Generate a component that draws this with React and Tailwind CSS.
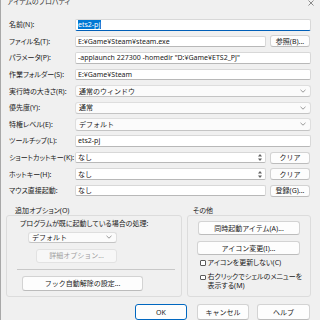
import React from "react";

const FONT = "font-['Noto_Sans','Noto_Sans_CJK_JP',sans-serif]";
const PALT = "[font-feature-settings:'palt']";

function Spinner() {
  return (
    <svg width="6" height="9" viewBox="0 0 6 9" className="shrink-0">
      <path d="M1 3.5 L3 1 L5 3.5 Z" fill="#606060" />
      <path d="M1 5.5 L3 8 L5 5.5 Z" fill="#606060" />
    </svg>
  );
}

function Chevron() {
  return (
    <svg width="6" height="4" viewBox="0 0 6 4" className="shrink-0">
      <path d="M0.5 0.8 L3 3.2 L5.5 0.8" fill="none" stroke="#707070" strokeWidth="0.7" />
    </svg>
  );
}

function Btn({ children, className = "" }) {
  return (
    <div
      className={
        "flex items-center justify-center whitespace-nowrap bg-[#fdfdfd] border border-[#d3d3d3] border-b-[#bcbcbc] rounded-[3px] text-[#1a1a1a] " +
        className
      }
    >
      {children}
    </div>
  );
}

function Row({ label, children }) {
  return (
    <div className="h-[16.7px] flex items-center">
      <div className={"w-[74px] pl-[8px] whitespace-nowrap " + PALT}>{label}</div>
      <div className="flex-1 flex items-center gap-[4px] pr-[9px]">{children}</div>
    </div>
  );
}

function Input({ children, spin = false }) {
  return (
    <div className="flex-1 h-[11.5px] bg-white border border-[#d8d8d8] border-b-[#b8b8b8] rounded-[2px] flex items-center pl-[2px] pr-[2px] overflow-hidden">
      <span className="flex-1 whitespace-nowrap">{children}</span>
      {spin && <Spinner />}
    </div>
  );
}

function Select({ children, className = "flex-1" }) {
  return (
    <div
      className={
        "h-[12.5px] bg-[#fbfbfb] border border-[#dedede] border-b-[#c4c4c4] rounded-[3px] flex items-center pl-[3px] pr-[4px] " +
        className
      }
    >
      <span className="flex-1 whitespace-nowrap">{children}</span>
      <Chevron />
    </div>
  );
}

function Check({ children }) {
  return (
    <div className="flex items-start gap-[2px]">
      <div className="mt-[1.5px] w-[5.5px] h-[5.5px] border border-[#5a5a5a] rounded-[1px] bg-white shrink-0" />
      <div className={"leading-[8.5px] " + PALT}>{children}</div>
    </div>
  );
}

export default function App() {
  return (
    <div
      className={
        "w-[320px] h-[320px] overflow-hidden bg-[#f0f0f0] border-l border-[#a8a8a8] flex flex-col text-[7px] leading-[9px] text-[#1a1a1a] " +
        FONT
      }
    >
      {/* title bar */}
      <div className="h-[16.6px] flex items-start justify-between pl-[6px] pr-[6px]">
        <span className={"-mt-[3px] text-[7px] text-[#333] " + PALT}>アイテムのプロパティ</span>
        <svg width="6" height="6" viewBox="0 0 6 6" className="mt-[0px]">
          <path d="M0.5 0.5 L5.5 5.5 M5.5 0.5 L0.5 5.5" stroke="#444" strokeWidth="0.6" />
        </svg>
      </div>

      <Row label="名前(N):">
        <div className="flex-1 h-[11.5px] bg-white border border-[#d8d8d8] border-b-[1.5px] border-b-[#005fb8] rounded-[2px] flex items-center pl-[1.5px]">
          <span className="bg-[#0078d4] text-white px-[0.5px] leading-[9px]">ets2-pj</span>
        </div>
      </Row>
      <Row label="ファイル名(T):">
        <Input>E:¥Game¥Steam¥steam.exe</Input>
        <Btn className="w-[40px] h-[12px] mr-[1px]">参照(B)...</Btn>
      </Row>
      <Row label="パラメータ(P):">
        <Input>-applaunch 227300 -homedir "D:¥Game¥ETS2_PJ"</Input>
      </Row>
      <Row label="作業フォルダー(S):">
        <Input>E:¥Game¥Steam</Input>
      </Row>
      <Row label="実行時の大きさ(R):">
        <Select>通常のウィンドウ</Select>
      </Row>
      <Row label="優先度(Y):">
        <Select>通常</Select>
      </Row>
      <Row label="特権レベル(E):">
        <Select>デフォルト</Select>
      </Row>
      <Row label="ツールチップ(L):">
        <Input>ets2-pj</Input>
      </Row>
      <Row label="ショートカットキー(K):">
        <Input spin>なし</Input>
        <Btn className="w-[40px] h-[12px] mr-[1px]">クリア</Btn>
      </Row>
      <Row label="ホットキー(H):">
        <Input spin>なし</Input>
        <Btn className="w-[40px] h-[12px] mr-[1px]">クリア</Btn>
      </Row>
      <Row label="マウス直接起動:">
        <Input>なし</Input>
        <Btn className="w-[40px] h-[12px] mr-[1px]">登録(G)...</Btn>
      </Row>

      {/* groups */}
      <div className="mt-[7px] flex gap-[5px] pl-[5px] pr-[9px]">
        {/* left group */}
        <div className="w-[176px] flex flex-col">
          <div className={"h-[9px] pl-[9px] whitespace-nowrap " + PALT}>追加オプション(O)</div>
          <div className="h-[82px] border border-[#dcdcdc] rounded-[3px] flex flex-col">
            <div className={"mt-[3px] pl-[13px] whitespace-nowrap " + PALT}>プログラムが既に起動している場合の処理:</div>
            <Select className="mt-[3.5px] ml-[21px] w-[89px] !h-[11px]">デフォルト</Select>
            <Btn className="mt-[6px] ml-[29px] w-[81px] h-[14px] !text-[#a0a0a0] !bg-[#f7f7f7] !border-[#e2e2e2]">詳細オプション...</Btn>
            <div className="mt-[6.5px] ml-[10px] w-[158px] h-[1px] bg-[#c8c8c8]" />
            <Btn className="mt-[5.5px] ml-[15px] w-[121px] h-[15px]">フック自動解除の設定...</Btn>
          </div>
        </div>
        {/* right group */}
        <div className="flex-1 flex flex-col">
          <div className={"h-[9px] pl-[6px] whitespace-nowrap " + PALT}>その他</div>
          <div className="h-[82px] border border-[#dcdcdc] rounded-[3px] flex flex-col">
            <Btn className="mt-[5px] ml-[10px] w-[102px] h-[14px]">同時起動アイテム(A)...</Btn>
            <Btn className="mt-[6px] ml-[9px] w-[103px] h-[14px]">アイコン変更(I)...</Btn>
            <div className="mt-[3.5px] ml-[12px]">
              <Check>アイコンを更新しない(C)</Check>
            </div>
            <div className="mt-[6px] ml-[12px]">
              <Check>
                右クリックでシェルのメニューを
                <br />
                表示する(M)
              </Check>
            </div>
          </div>
        </div>
      </div>

      {/* bottom buttons */}
      <div className="mt-[7px] flex pl-[134px]">
        <Btn className="w-[52px] h-[16px] !border-[#0067c0] !border-[1.5px]">OK</Btn>
        <Btn className="ml-[10px] w-[52px] h-[16px]">キャンセル</Btn>
        <Btn className="ml-[8px] w-[53px] h-[16px]">ヘルプ</Btn>
      </div>
    </div>
  );
}
